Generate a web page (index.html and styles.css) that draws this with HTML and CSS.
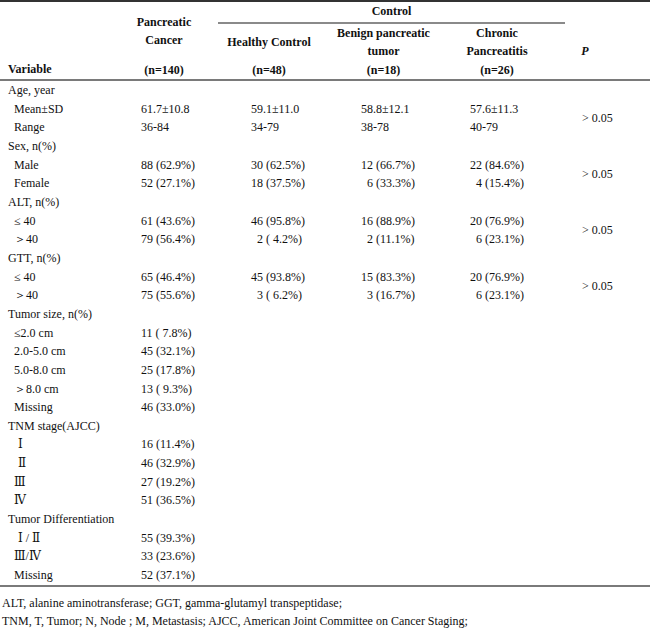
FILE: index.html
```html
<!DOCTYPE html>
<html>
<head>
    <title>Table 1 - Patient characteristics</title>
    <link rel="stylesheet" href="styles.css">
</head>
<body>
    <table class="stats">
        <colgroup>
            <col style="width:128px">
            <col style="width:90px">
            <col style="width:108px">
            <col style="width:115px">
            <col style="width:124px">
            <col style="width:85px">
        </colgroup>
        <thead>
            <tr class="r1">
                <th rowspan="3" class="var">Variable</th>
                <th rowspan="2" class="pc">Pancreatic<br>Cancer</th>
                <th colspan="3" class="ctrl">Control</th>
                <th></th>
            </tr>
            <tr class="r2">
                <th class="hc">Healthy Control</th>
                <th class="bp">Benign pancreatic<br>tumor</th>
                <th class="cp">Chronic<br>Pancreatitis</th>
                <th rowspan="2" class="p"><i>P</i></th>
            </tr>
            <tr class="r3">
                <th class="pc">(n=140)</th>
                <th class="hc">(n=48)</th>
                <th class="bp">(n=18)</th>
                <th class="cp">(n=26)</th>
            </tr>
        </thead>
        <tbody>
            <tr><td class="grp">Age, year</td><td></td><td></td><td></td><td></td><td></td></tr>
            <tr><td class="sub">Mean±SD</td><td>61.7±10.8</td><td>59.1±11.0</td><td>58.8±12.1</td><td>57.6±11.3</td><td rowspan="2" class="pv">&gt; 0.05</td></tr>
            <tr><td class="sub">Range</td><td>36-84</td><td>34-79</td><td>38-78</td><td>40-79</td></tr>

            <tr><td class="grp">Sex, n(%)</td><td></td><td></td><td></td><td></td><td></td></tr>
            <tr><td class="sub">Male</td><td>88 (62.9%)</td><td>30 (62.5%)</td><td>12 (66.7%)</td><td>22 (84.6%)</td><td rowspan="2" class="pv">&gt; 0.05</td></tr>
            <tr><td class="sub">Female</td><td>52 (27.1%)</td><td>18 (37.5%)</td><td>&#8199;6 (33.3%)</td><td>&#8199;4 (15.4%)</td></tr>

            <tr><td class="grp">ALT, n(%)</td><td></td><td></td><td></td><td></td><td></td></tr>
            <tr><td class="sub">≤ 40</td><td>61 (43.6%)</td><td>46 (95.8%)</td><td>16 (88.9%)</td><td>20 (76.9%)</td><td rowspan="2" class="pv">&gt; 0.05</td></tr>
            <tr><td class="sub">＞40</td><td>79 (56.4%)</td><td>&#8199;2 ( 4.2%)</td><td>&#8199;2 (11.1%)</td><td>&#8199;6 (23.1%)</td></tr>

            <tr><td class="grp">GTT, n(%)</td><td></td><td></td><td></td><td></td><td></td></tr>
            <tr><td class="sub">≤ 40</td><td>65 (46.4%)</td><td>45 (93.8%)</td><td>15 (83.3%)</td><td>20 (76.9%)</td><td rowspan="2" class="pv">&gt; 0.05</td></tr>
            <tr><td class="sub">＞40</td><td>75 (55.6%)</td><td>&#8199;3 ( 6.2%)</td><td>&#8199;3 (16.7%)</td><td>&#8199;6 (23.1%)</td></tr>

            <tr><td class="grp">Tumor size, n(%)</td><td></td><td></td><td></td><td></td><td></td></tr>
            <tr><td class="sub">≤2.0 cm</td><td>11 ( 7.8%)</td><td></td><td></td><td></td><td></td></tr>
            <tr><td class="sub">2.0-5.0 cm</td><td>45 (32.1%)</td><td></td><td></td><td></td><td></td></tr>
            <tr><td class="sub">5.0-8.0 cm</td><td>25 (17.8%)</td><td></td><td></td><td></td><td></td></tr>
            <tr><td class="sub">＞8.0 cm</td><td>13 ( 9.3%)</td><td></td><td></td><td></td><td></td></tr>
            <tr><td class="sub">Missing</td><td>46 (33.0%)</td><td></td><td></td><td></td><td></td></tr>

            <tr><td class="grp">TNM stage(AJCC)</td><td></td><td></td><td></td><td></td><td></td></tr>
            <tr><td class="sub roman">Ⅰ</td><td>16 (11.4%)</td><td></td><td></td><td></td><td></td></tr>
            <tr><td class="sub roman">Ⅱ</td><td>46 (32.9%)</td><td></td><td></td><td></td><td></td></tr>
            <tr><td class="sub">Ⅲ</td><td>27 (19.2%)</td><td></td><td></td><td></td><td></td></tr>
            <tr><td class="sub">Ⅳ</td><td>51 (36.5%)</td><td></td><td></td><td></td><td></td></tr>

            <tr><td class="grp">Tumor Differentiation</td><td></td><td></td><td></td><td></td><td></td></tr>
            <tr><td class="sub roman">Ⅰ / Ⅱ</td><td>55 (39.3%)</td><td></td><td></td><td></td><td></td></tr>
            <tr><td class="sub">Ⅲ/Ⅳ</td><td>33 (23.6%)</td><td></td><td></td><td></td><td></td></tr>
            <tr><td class="sub">Missing</td><td>52 (37.1%)</td><td></td><td></td><td></td><td></td></tr>
        </tbody>
    </table>

    <div class="notes">
        <p>ALT, alanine aminotransferase; GGT, gamma-glutamyl transpeptidase;</p>
        <p>TNM, T, Tumor; N, Node ; M, Metastasis; AJCC, American Joint Committee on Cancer Staging;</p>
    </div>
</body>
</html>
```

FILE: styles.css
```css
body {
    margin: 0;
    background: #fff;
    color: #111;
    font-family: "Liberation Serif", "DejaVu Serif", serif;
    font-size: 12px;
}
.stats {
    width: 650px;
    table-layout: fixed;
    border-collapse: collapse;
    border-top: 2px solid #333;
}
.stats thead { border-bottom: 2px solid #7a7a7a; }
.stats tbody { border-bottom: 2px solid #7a7a7a; }

th {
    padding: 0;
    font-weight: bold;
    line-height: 18.5px;
    text-align: center;
    vertical-align: middle;
}
.r1 { height: 19px; }
.r2 { height: 38px; }
.r3 { height: 19px; }
th.var {
    text-align: left;
    vertical-align: bottom;
    padding: 0 0 1px 8px;
}
th.pc { padding-right: 18px; }
th.hc { padding-right: 6px; }
th.cp { padding-right: 12px; }
th.p { padding-right: 45px; }
th.ctrl {
    border-bottom: 2px solid #8a8a8a;
    padding-bottom: 1px;
}

td {
    padding: 0;
    height: 18.65px;
    line-height: 18.65px;
    white-space: pre;
    vertical-align: middle;
}
td.grp { padding-left: 8px; }
td.sub { padding-left: 14px; }
td.roman { padding-left: 18px; }
td:nth-child(2) { padding-left: 13px; }
td:nth-child(3) { padding-left: 33px; }
td:nth-child(4) { padding-left: 35px; }
td:nth-child(5) { padding-left: 29px; }
td.pv { padding-left: 17px; }

.notes { padding: 7px 0 0 2px; }
.notes p {
    margin: 0;
    line-height: 18px;
}
```
